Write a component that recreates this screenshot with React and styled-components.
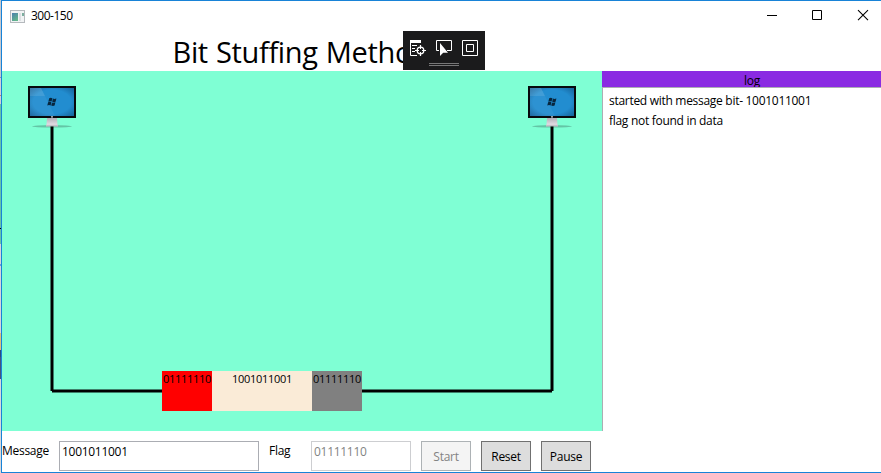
import React from 'react';
import styled, { createGlobalStyle } from 'styled-components';

const Global = createGlobalStyle`
  * { box-sizing: border-box; }
  body { margin: 0; background: #fff; overflow: hidden; }
`;

const Screen = styled.div`
  display: flex;
  width: 881px;
  height: 473px;
  overflow: hidden;
  font-family: 'Open Sans', 'Noto Sans', sans-serif;
  font-size: 12px;
  line-height: 16px;
  letter-spacing: -0.29px;
  color: #000;
  white-space: nowrap;
`;

const DesktopEdge = styled.div`
  flex: none;
  width: 1px;
  background: linear-gradient(
    #c6c9d0 0 77px, #7795bd 77px 78px, #d3cfd8 78px 95px, #b98a6c 95px 96px,
    #d3cfd8 96px 104px, #66c4a6 104px 228px, #000 228px 229px,
    #66c4a6 229px 244px, #d8d3dc 244px 264px, #6a9fd8 264px 266px,
    #d8d3dc 266px 333px, #e0c078 333px 350px, #2b4a80 350px 357px,
    #44557f 357px 379px, #d8d8dc 379px
  );
`;

const Window = styled.div`
  flex: none;
  position: relative;
  display: flex;
  flex-direction: column;
  width: 880px;
  height: 473px;
  border: 1px solid #1883d7;
  border-right: 0;
  background: #fff;
`;

const TitleBar = styled.header`
  display: flex;
  align-items: center;
  flex: none;
  height: 30px;
  padding-left: 8px;
`;

const WindowName = styled.span`
  flex: 1;
  margin-left: 6px;
  letter-spacing: -0.5px;
`;

const Caption = styled.svg`
  display: block;
  flex: none;
  width: 141px;
  height: 30px;
`;

const Heading = styled.h1`
  flex: none;
  margin: 0;
  height: 40px;
  padding-left: 170.5px;
  font-size: 29px;
  font-weight: 400;
  line-height: 42px;
  letter-spacing: -0.35px;
  word-spacing: 1px;
`;

const Main = styled.main`
  display: flex;
  flex: none;
  height: 360px;
`;

const Canvas = styled.section`
  position: relative;
  flex: none;
  width: 600px;
  height: 360px;
  background: #7fffd4;
`;

const Drawing = styled.svg`
  display: block;
`;

const Packet = styled.div`
  position: absolute;
  left: 160px;
  top: 300px;
  display: flex;
  height: 40px;
  font-size: 11px;
  letter-spacing: -0.28px;
`;

const Bits = styled.div`
  width: ${(p) => p.$width}px;
  background: ${(p) => p.$fill};
  text-align: center;
`;

const LogPanel = styled.aside`
  display: flex;
  flex-direction: column;
  flex: none;
  width: 300px;
`;

const LogTitle = styled.div`
  height: 16px;
  line-height: 19px;
  background: #8a2be2;
  text-align: center;
`;

const LogList = styled.div`
  flex: 1;
  border-left: 1px solid #abadb3;
  border-top: 1px solid #abadb3;
  padding: 3px 6px;
`;

const LogItem = styled.div`
  height: 20px;
  line-height: 20px;
`;

const Controls = styled.footer`
  display: flex;
  flex: none;
  height: 41px;
  padding-top: 10px;
`;

const Label = styled.label`
  width: ${(p) => p.$width}px;
  padding-top: 2px;
`;

const Field = styled.div`
  width: ${(p) => p.$width}px;
  height: 30px;
  margin-right: 10px;
  padding: 2px 2px;
  border: 1px solid ${(p) => (p.$disabled ? '#cdced1' : '#abadb3')};
  color: ${(p) => (p.$disabled ? '#838383' : '#000')};
`;

const Button = styled.button`
  width: 50px;
  height: 30px;
  margin: 0 10px 0 0;
  padding: 2px 0 0;
  font: inherit;
  letter-spacing: inherit;
  border: 1px solid #707070;
  background: #ddd;
  color: #000;
  &:disabled {
    border-color: #adb2b5;
    background: #f4f4f4;
    color: #838383;
  }
`;

const DebugBar = styled.div`
  position: absolute;
  left: 401px;
  top: 30px;
  width: 82px;
  height: 39px;
  background: #1b1b1c;
`;

function AppIcon() {
  return (
    <svg width="15" height="13" viewBox="0 0 15 13">
      <defs>
        <linearGradient id="thumb" x1="0" y1="0" x2="0.6" y2="1">
          <stop offset="0" stopColor="#4b7fae" />
          <stop offset="1" stopColor="#63b58b" />
        </linearGradient>
      </defs>
      <rect x="0.5" y="0.5" width="14" height="12" fill="#f1f3f4" stroke="#b5b9bd" />
      <rect x="2" y="3" width="6" height="8" fill="url(#thumb)" />
      <rect x="9" y="3" width="2" height="8" fill="#dcdfe2" />
      <rect x="12" y="3" width="2" height="3" fill="#7cae9f" />
    </svg>
  );
}

function Monitor({ x }) {
  return (
    <g transform={`translate(${x} 15)`}>
      <ellipse cx="24" cy="40.3" rx="20" ry="1.2" fill="#4a8c78" opacity="0.5" />
      <path d="M19 32h10l.6 8H18.4z" fill="url(#stand)" />
      <path d="M18 38.8h12v1.7H18z" fill="#c4bfc8" />
      <rect width="48" height="32" fill="#07090d" />
      <rect x="2" y="2" width="44" height="28" fill="url(#panel)" />
      <path d="M2 2h11l14 28H2z" fill="#fff" opacity="0.05" />
      <path d="M2 2h11l4 8H2z" fill="#fff" opacity="0.1" />
      <rect x="23" y="30.3" width="2" height="1.2" fill="#d5dce2" />
      <g fill="#08263d">
        <path d="M21.2 12.3q1.6-1 3.2 0l-.8 3.3q-1.7-.8-3.3.1z" />
        <path d="M24.9 12.5q1.6.8 3.5-.1l-.8 3.4q-1.6.9-3.4 0z" />
        <path d="M20.1 16.2q1.6-.9 3.3 0l-.8 3.3q-1.6-.9-3.3.1z" />
        <path d="M24 16.4q1.6.8 3.4-.1l-.8 3.3q-1.6.9-3.4 0z" />
      </g>
    </g>
  );
}

function Network() {
  return (
    <Drawing width="600" height="360" viewBox="0 0 600 360">
      <defs>
        <radialGradient id="panel" r="0.72">
          <stop offset="0.6" stopColor="#228dd0" />
          <stop offset="1" stopColor="#155f96" />
        </radialGradient>
        <linearGradient id="stand" x1="0" y1="0" x2="0" y2="1">
          <stop offset="0" stopColor="#b3afb8" />
          <stop offset="1" stopColor="#ebe7ee" />
        </linearGradient>
      </defs>
      <Monitor x={26} />
      <Monitor x={526} />
      <g stroke="#000" strokeWidth="3">
        <path d="M50 55.5V320M50 320H550M550 320V55.5" />
      </g>
    </Drawing>
  );
}

function CaptionButtons() {
  return (
    <Caption viewBox="0 0 141 30" fill="none" stroke="#000">
      <path d="M27 14.5h10" />
      <path d="M72.5 9.5h9v9h-9z" />
      <path d="M118 9.2l10 10M128 9.2l-10 10" strokeWidth="1.1" />
    </Caption>
  );
}

function DebugIcons() {
  return (
    <Drawing width="82" height="39" viewBox="0 0 82 39" fill="none" stroke="#fff">
      <path d="M7 9h11v3H7z" fill="#fff" stroke="none" />
      <path d="M7.5 11v13.5H14M9 14.5h5M9 17.5h3M9 20.5h3" />
      <circle cx="17.5" cy="19.5" r="3.3" strokeWidth="1.3" />
      <path d="M17.5 14v4M17.5 21v4M12 19.5h4M19 19.5h4" strokeWidth="1.2" />
      <path d="M36 19.5h-2.5v-10h15v10H44" />
      <path d="M37 12v13l3.2-3.2h4.8z" fill="#fff" stroke="none" />
      <path d="M59.5 9.5h15v15h-15zM63.5 13.5h7v7h-7z" />
      <path d="M26 32.5h30M26 34.5h30" stroke="#777" />
    </Drawing>
  );
}

export default function App() {
  return (
    <Screen>
      <Global />
      <DesktopEdge />
      <Window>
        <TitleBar>
          <AppIcon />
          <WindowName>300-150</WindowName>
          <CaptionButtons />
        </TitleBar>
        <Heading>Bit Stuffing Method</Heading>
        <Main>
          <Canvas>
            <Network />
            <Packet>
              <Bits $width={50} $fill="#ff0000">01111110</Bits>
              <Bits $width={100} $fill="#faebd7">1001011001</Bits>
              <Bits $width={50} $fill="#808080">01111110</Bits>
            </Packet>
          </Canvas>
          <LogPanel>
            <LogTitle>log</LogTitle>
            <LogList>
              <LogItem>started with message bit- 1001011001</LogItem>
              <LogItem>flag not found in data</LogItem>
            </LogList>
          </LogPanel>
        </Main>
        <Controls>
          <Label $width={57}>Message</Label>
          <Field $width={200}>1001011001</Field>
          <Label $width={42}>Flag</Label>
          <Field $width={100} $disabled>01111110</Field>
          <Button disabled>Start</Button>
          <Button>Reset</Button>
          <Button>Pause</Button>
        </Controls>
        <DebugBar>
          <DebugIcons />
        </DebugBar>
      </Window>
    </Screen>
  );
}
